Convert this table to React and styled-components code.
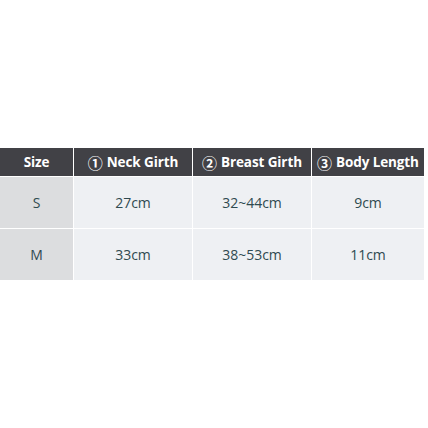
import React from "react";
import styled, { createGlobalStyle } from "styled-components";

const Global = createGlobalStyle`
  html, body { margin: 0; padding: 0; background: #ffffff; }
  body { font-family: "Open Sans", "DejaVu Sans", sans-serif; }
`;

const Page = styled.div`
  width: 428px;
  height: 428px;
  padding-top: 148px;
  box-sizing: border-box;
  background: #ffffff;
`;

const Table = styled.div`
  width: 424px;
  display: grid;
  grid-template-columns: 73px 118px 118px 112px;
  grid-template-rows: 28px 51px 51px;
  column-gap: 1px;
  row-gap: 1px;
  background: #ffffff;
`;

const Head = styled.div`
  background: #414146;
  color: #ffffff;
  font-weight: 700;
  font-size: 13.5px;
  display: flex;
  align-items: center;
  justify-content: center;
  white-space: nowrap;
  letter-spacing: -0.1px;
`;

const Circ = styled.span`
  font-family: "Noto Sans CJK SC", "DejaVu Sans", sans-serif;
  font-weight: 700;
  font-size: 15px;
  line-height: 1;
  margin-right: 4px;
`;

const Cell = styled.div`
  background: ${(p) => (p.$first ? "#dcdddf" : "#eef0f3")};
  color: #2f4a50;
  font-size: 14px;
  display: flex;
  align-items: center;
  justify-content: center;
`;

const rows = [
  ["S", "27cm", "32~44cm", "9cm"],
  ["M", "33cm", "38~53cm", "11cm"],
];

export default function App() {
  return (
    <Page>
      <Global />
      <Table>
        <Head>Size</Head>
        <Head><Circ>①</Circ>Neck Girth</Head>
        <Head><Circ>②</Circ>Breast Girth</Head>
        <Head><Circ>③</Circ>Body Length</Head>
        {rows.map((r) =>
          r.map((v, i) => (
            <Cell key={r[0] + i} $first={i === 0}>{v}</Cell>
          ))
        )}
      </Table>
    </Page>
  );
}
